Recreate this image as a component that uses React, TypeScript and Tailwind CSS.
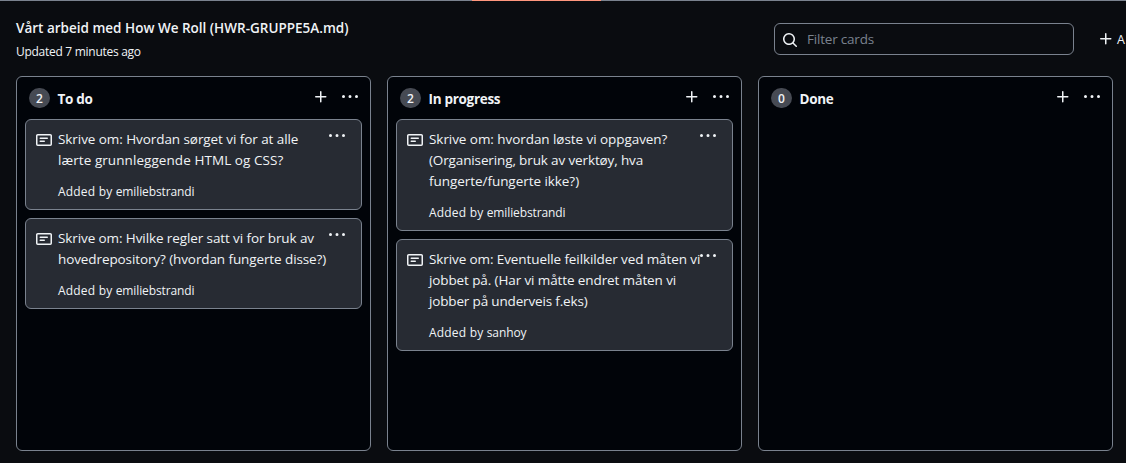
import React from "react";

type Card = { lines: string[]; author: string; spacing: string[] };
type Column = { title: string; spacing: string; cards: Card[] };

const columns: Column[] = [
  {
    title: "To do",
    spacing: "tracking-[-0.1px]",
    cards: [
      {
        lines: ["Skrive om: Hvordan sørget vi for at alle", "lærte grunnleggende HTML og CSS?"],
        spacing: ["tracking-[-0.07px]", "tracking-[0.07px]"],
        author: "emiliebstrandi",
      },
      {
        lines: ["Skrive om: Hvilke regler satt vi for bruk av", "hovedrepository? (hvordan fungerte disse?)"],
        spacing: ["tracking-[-0.1px]", "tracking-[-0.1px]"],
        author: "emiliebstrandi",
      },
    ],
  },
  {
    title: "In progress",
    spacing: "tracking-[-0.2px]",
    cards: [
      {
        lines: [
          "Skrive om: hvordan løste vi oppgaven?",
          "(Organisering, bruk av verktøy, hva",
          "fungerte/fungerte ikke?)",
        ],
        spacing: ["tracking-[-0.06px]", "tracking-[-0.13px]", "tracking-[-0.05px]"],
        author: "emiliebstrandi",
      },
      {
        lines: [
          "Skrive om: Eventuelle feilkilder ved måten vi",
          "jobbet på. (Har vi måtte endret måten vi",
          "jobber på underveis f.eks)",
        ],
        spacing: ["tracking-[-0.1px]", "tracking-[-0.11px]", "tracking-[-0.16px]"],
        author: "sanhoy",
      },
    ],
  },
  { title: "Done", spacing: "tracking-[-0.1px]", cards: [] },
];

function Icon({ d, className = "" }: { d: string; className?: string }) {
  return (
    <svg viewBox="0 0 16 16" className={`h-4 w-4 shrink-0 fill-current ${className}`} aria-hidden="true">
      <path fillRule="evenodd" d={d} />
    </svg>
  );
}

const PLUS =
  "M7.75 2a.75.75 0 01.75.75V7h4.25a.75.75 0 110 1.5H8.5v4.25a.75.75 0 11-1.5 0V8.5H2.75a.75.75 0 010-1.5H7V2.75A.75.75 0 017.75 2z";
const KEBAB =
  "M8 9a1.5 1.5 0 100-3 1.5 1.5 0 000 3zM1.5 9a1.5 1.5 0 100-3 1.5 1.5 0 000 3zm13 0a1.5 1.5 0 100-3 1.5 1.5 0 000 3z";
const SEARCH =
  "M11.5 7a4.499 4.499 0 11-8.998 0A4.499 4.499 0 0111.5 7zm-.82 4.74a6 6 0 111.06-1.06l3.04 3.04a.75.75 0 11-1.06 1.06l-3.04-3.04z";
const NOTE =
  "M0 3.75C0 2.784.784 2 1.75 2h12.5c.966 0 1.75.784 1.75 1.75v8.5A1.75 1.75 0 0114.25 14H1.75A1.75 1.75 0 010 12.25v-8.5zm1.75-.25a.25.25 0 00-.25.25v8.5c0 .138.112.25.25.25h12.5a.25.25 0 00.25-.25v-8.5a.25.25 0 00-.25-.25H1.75zM3.5 6.25a.75.75 0 01.75-.75h7a.75.75 0 010 1.5h-7a.75.75 0 01-.75-.75zm.75 2.25a.75.75 0 000 1.5h4a.75.75 0 000-1.5h-4z";

function CardView({ card }: { card: Card }) {
  return (
    <article className="flex rounded-md border border-[#7a828e] bg-[#272b33] pt-2 pr-4 pb-2 pl-2.5">
      <Icon d={NOTE} className="mt-1" />
      <div className="ml-1.5 w-[271px] shrink-0 pt-px whitespace-nowrap">
        <p className="text-[13.5px] leading-[21px]">
          {card.lines.map((line, i) => (
            <span key={line} className={`block ${card.spacing[i]}`}>
              {line}
            </span>
          ))}
        </p>
        <p className="mt-[11px] text-[12px] leading-[19px] tracking-[-0.12px]">
          <span className="tracking-[0.2px]">Added by </span>
          {card.author}
        </p>
      </div>
      <button aria-label="Card options" className="h-4">
        <Icon d={KEBAB} />
      </button>
    </article>
  );
}

function ColumnView({ column }: { column: Column }) {
  return (
    <section className="flex h-[375px] w-[355px] shrink-0 flex-col rounded-md border border-[#7a828e] bg-[#010409] px-2">
      <header className="flex h-[42px] shrink-0 items-center pr-1 pl-1">
        <span className="flex h-5 w-[21px] items-center justify-center rounded-full bg-[#464a53] pt-px text-[12px] leading-[18px] font-semibold">
          {column.cards.length}
        </span>
        <h3 className={`ml-[7.5px] pt-0.5 text-[13.5px] leading-[21px] font-bold ${column.spacing}`}>
          <span className="tracking-[-0.3px]">{column.title}</span>
        </h3>
        <button aria-label="Add a note" className="-mt-0.5 ml-auto">
          <Icon d={PLUS} />
        </button>
        <button aria-label="Column options" className="-mt-0.5 ml-[13px]">
          <Icon d={KEBAB} />
        </button>
      </header>
      <div className="flex flex-col gap-2">
        {column.cards.map((card) => (
          <CardView key={card.lines[0]} card={card} />
        ))}
      </div>
    </section>
  );
}

export default function App() {
  return (
    <div className="h-[463px] w-full overflow-hidden bg-[#0a0c10] font-['Open_Sans','Noto_Sans',sans-serif] text-[#f0f3f6]">
      <div className="flex h-px bg-[#7a828e]">
        <div className="ml-[472px] w-[129px] bg-[#ff967d]" />
      </div>
      <div className="flex h-[75px] items-start pl-4 whitespace-nowrap">
        <div className="w-[758px] shrink-0 pt-[17px]">
          <h1 className="text-[13.5px] leading-[21px] font-semibold">Vårt arbeid med How We Roll (HWR-GRUPPE5A.md)</h1>
          <p className="mt-1 text-[12px] leading-[18px] tracking-[-0.28px]">Updated 7 minutes ago</p>
        </div>
        <label className="mt-[22px] flex h-8 w-[300px] shrink-0 items-center rounded-md border border-[#7a828e] pl-[7px]">
          <Icon d={SEARCH} className="mt-px" />
          <input
            placeholder="Filter cards"
            className="ml-[9px] w-full bg-transparent text-[13.5px] tracking-[-0.2px] placeholder:text-[#7a828e] focus:outline-none"
          />
        </label>
        <button className="mt-[30px] ml-6 flex shrink-0 text-[12.5px] leading-[18px] font-medium">
          <Icon d={PLUS} />
          <span className="ml-[3px]">A</span>
        </button>
      </div>
      <main className="flex gap-4 pl-4">
        {columns.map((column) => (
          <ColumnView key={column.title} column={column} />
        ))}
      </main>
    </div>
  );
}
